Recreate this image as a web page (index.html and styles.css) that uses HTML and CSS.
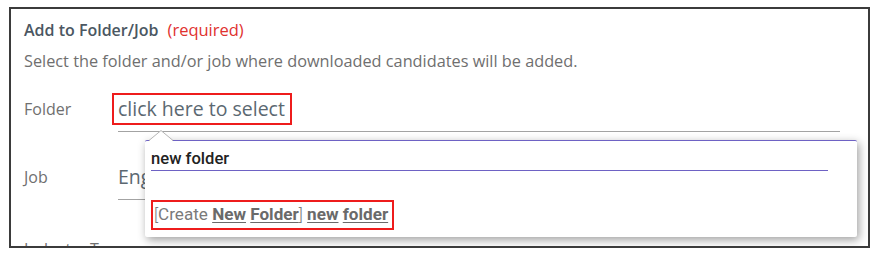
FILE: index.html
```html
<!DOCTYPE html>
<html>
<head>
<meta charset="utf-8">
<link rel="stylesheet" href="styles.css">
</head>
<body>
<div class="panel">
  <div class="title"><span class="title-main">Add to Folder/Job</span><span class="required">(required)</span></div>
  <p class="hint">Select the folder and/or job where downloaded candidates will be added.</p>
  <div class="field field-folder">
    <span class="label">Folder</span>
    <div class="control"><span class="value boxed">click here to select</span></div>
  </div>
  <div class="field field-job">
    <span class="label">Job</span>
    <div class="control"><span class="value">Engineering Manager</span></div>
  </div>
  <div class="field field-more">
    <span class="label">Industry Type</span>
    <div class="control"><span class="value"></span></div>
  </div>

  <div class="popup">
    <svg class="caret" width="24" height="11" viewBox="0 0 24 11"><polygon points="0,10.5 12,0.5 24,10.5" fill="#fff" stroke="#b5b5b5" stroke-width="1"/><rect x="1" y="10" width="22" height="1.5" fill="#fff"/></svg>
    <div class="search">new folder</div>
    <div class="create"><span class="bracket">[</span>Create <u>New</u> <u>Folder</u><span class="bracket">]</span> <u>new</u> <u>folder</u></div>
  </div>
</div>
</body>
</html>
```
FILE: styles.css
```css
html, body {
  margin: 0;
  padding: 0;
  background: #ffffff;
}
body {
  font-family: "Open Sans", "Liberation Sans", sans-serif;
}
.panel {
  position: relative;
  margin: 7px 0 0 9px;
  border: 2px solid #3b3b3b;
  padding: 10px 13px 0 13px;
  box-sizing: border-box;
  width: 861px;
  height: 241px;
  overflow: hidden;
}
.title {
  font-size: 16px;
  line-height: 22px;
  display: flex;
  gap: 9px;
}
.title-main {
  font-weight: 600;
  color: #4b5762;
}
.required {
  color: #e0312f;
  font-size: 16.5px;
}
.hint {
  margin: 9px 0 0 0;
  font-size: 16.3px;
  line-height: 22px;
  color: #6f6f6f;
}
.field {
  display: grid;
  grid-template-columns: 94px 1fr;
  align-items: start;
}
.field-folder { margin-top: 21px; }
.field-job { margin-top: 29px; }
.field-more { margin-top: 33px; }
.label {
  font-size: 16px;
  line-height: 32px;
  color: #6f6f6f;
  white-space: nowrap;
}
.control {
  margin-right: 15px;
  padding-bottom: 6px;
  border-bottom: 1px solid #a3a3a3;
  height: 32px;
}
.value {
  display: inline-block;
  font-size: 19.5px;
  line-height: 28px;
  color: #5b6871;
  border: 2px solid transparent;
  padding: 0 5px 0 4px;
  margin-left: -6px;
  white-space: nowrap;
}
.boxed {
  border-color: #ee1c1c;
}
.popup {
  position: absolute;
  left: 134px;
  top: 131px;
  width: 712px;
  height: 97px;
  box-sizing: border-box;
  background: #ffffff;
  border-top: 1px solid #6e62c4;
  border-radius: 2px;
  box-shadow: 2px 3px 10px rgba(0, 0, 0, 0.38);
  padding: 8px 29px 0 6px;
  font-family: Roboto, "Liberation Sans", sans-serif;
}
.caret {
  position: absolute;
  left: 4px;
  top: -11px;
  display: block;
}
.search {
  font-size: 16.6px;
  font-weight: 500;
  line-height: 20px;
  color: #222222;
  padding-bottom: 1px;
  border-bottom: 1px solid #6e62c4;
}
.create {
  display: inline-block;
  margin-top: 29px;
  border: 2px solid #ee1c1c;
  padding: 2px 4px 3px 1px;
  font-size: 17.1px;
  line-height: 21px;
  color: #7a7a7a;
  white-space: nowrap;
}
.create u {
  font-weight: 700;
  color: #6a6a6a;
  text-decoration-thickness: 1px;
  text-underline-offset: 2px;
}
.bracket {
  font-weight: 300;
}
```
